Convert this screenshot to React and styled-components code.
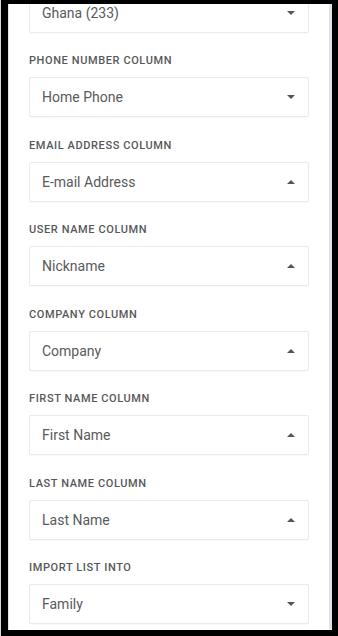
import React from "react";
import styled, { createGlobalStyle, css } from "styled-components";

const GlobalStyle = createGlobalStyle`
  html, body {
    margin: 0;
    padding: 0;
    background: #000;
  }
  body {
    font-family: Roboto, "Liberation Sans", sans-serif;
  }
`;

const Frame = styled.div`
  width: 338px;
  height: 636px;
  box-sizing: border-box;
  padding: 4px 6px 6px 7px;
  background: #000;
  border-left: 1px solid #d8d8d8;
  display: flex;
`;

const Panel = styled.div`
  flex: 1;
  background: #fff;
  border-left: 1px solid #e2e2e2;
  border-right: 3px solid #e3e3ee;
  overflow: hidden;
`;

// the list is scrolled down a little, so the first select is cut off at the top
const FieldList = styled.div`
  display: flex;
  flex-direction: column;
  gap: 21.5px;
  padding: 0 20px;
  margin-top: -11.5px;
`;

const Field = styled.div`
  display: flex;
  flex-direction: column;
  gap: 9px;
`;

const Label = styled.div`
  font-size: 11px;
  line-height: 14px;
  font-weight: 500;
  letter-spacing: 0.6px;
  color: #585858;
  text-transform: uppercase;
`;

const Select = styled.div`
  height: 40px;
  box-sizing: border-box;
  display: flex;
  align-items: center;
  justify-content: space-between;
  padding: 0 13px 0 12px;
  background: #fff;
  border: 1px solid #ebebeb;
  border-radius: 2px;
  box-shadow: 0 1px 1px rgba(0, 0, 0, 0.03);
  font-size: 14px;
  color: #5a5a5a;
`;

const Caret = styled.span`
  width: 0;
  height: 0;
  border-left: 4px solid transparent;
  border-right: 4px solid transparent;
  ${({ up }) =>
    up
      ? css`
          border-bottom: 4px solid #555;
        `
      : css`
          border-top: 4px solid #555;
        `}
`;

const fields = [
  { label: null, value: "Ghana (233)", up: false },
  { label: "Phone Number Column", value: "Home Phone", up: false },
  { label: "Email Address Column", value: "E-mail Address", up: true },
  { label: "User Name Column", value: "Nickname", up: true },
  { label: "Company Column", value: "Company", up: true },
  { label: "First Name Column", value: "First Name", up: true },
  { label: "Last Name Column", value: "Last Name", up: true },
  { label: "Import List Into", value: "Family", up: false },
];

const App = () => {
  return (
    <>
      <GlobalStyle />
      <Frame>
        <Panel>
          <FieldList>
            {fields.map(({ label, value, up }, index) => (
              <Field key={`field-${index}`}>
                {label && <Label>{label}</Label>}
                <Select>
                  <span>{value}</span>
                  <Caret up={up} />
                </Select>
              </Field>
            ))}
          </FieldList>
        </Panel>
      </Frame>
    </>
  );
};

export default App;
